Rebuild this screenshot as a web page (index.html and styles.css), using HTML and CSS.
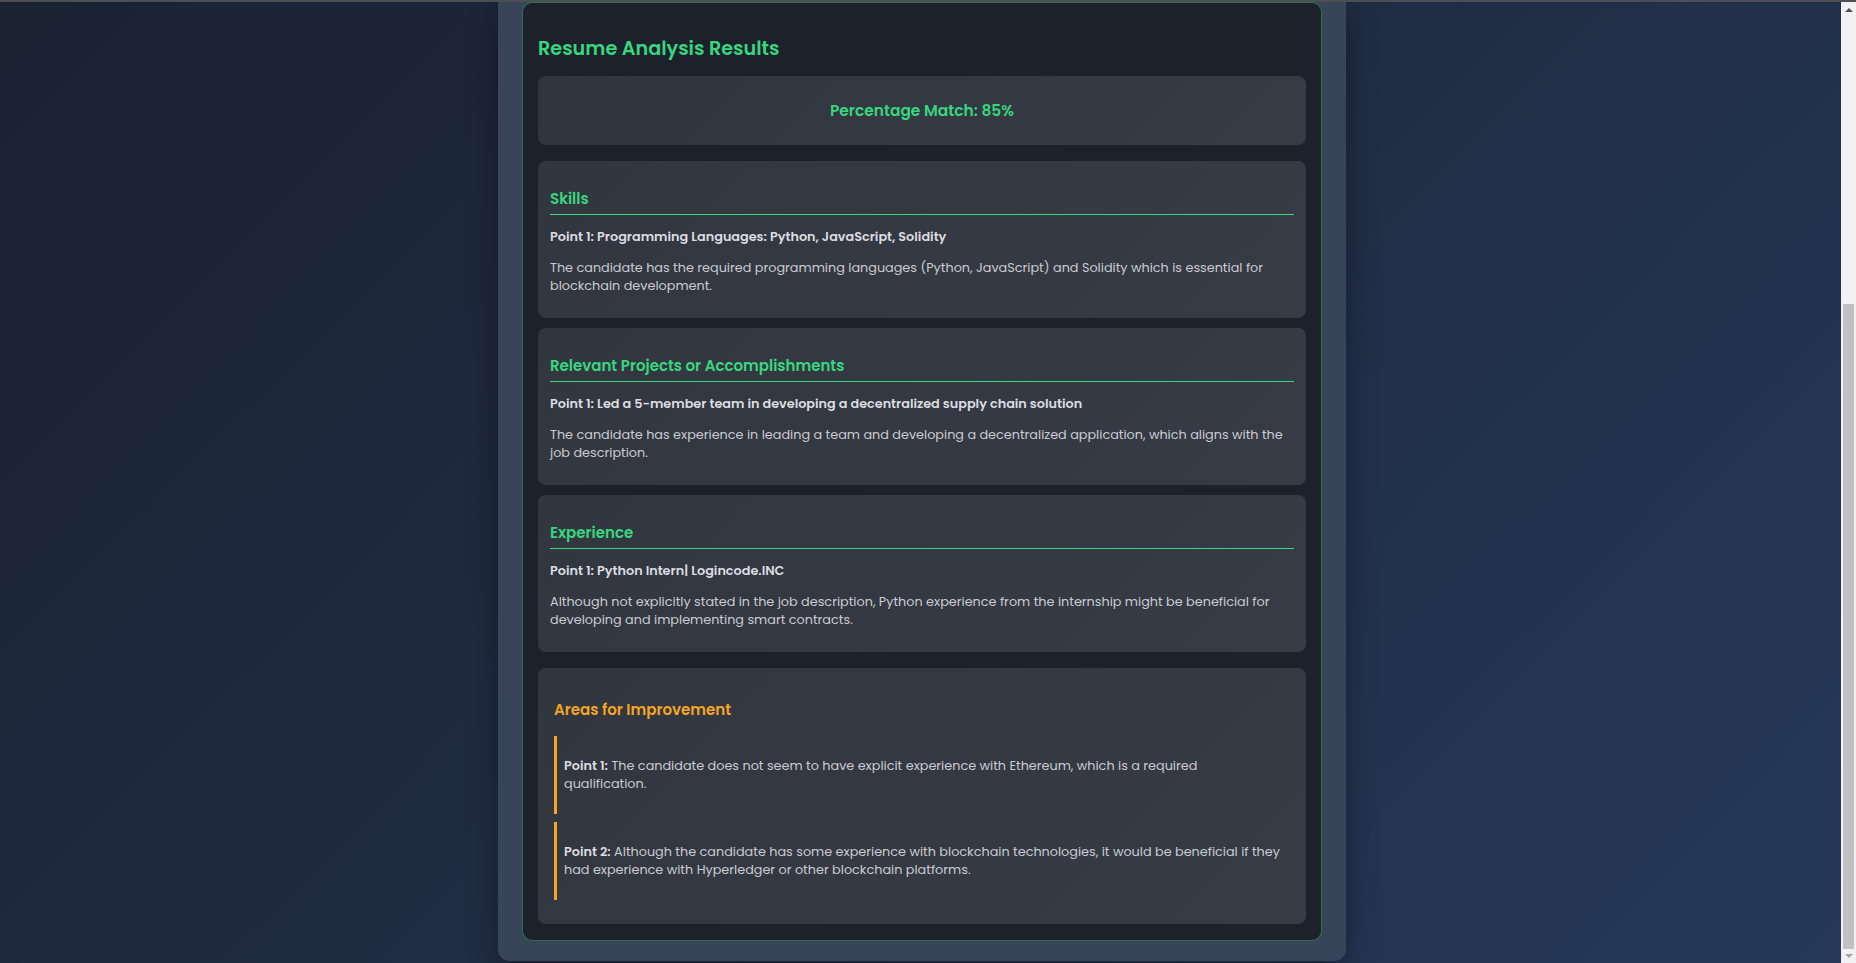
FILE: index.html
```html
<!DOCTYPE html>
<html lang="en">
<head>
<meta charset="utf-8">
<title>Resume Analysis Results</title>
<link rel="stylesheet" href="styles.css">
</head>
<body>
<div class="topline"></div>
<div class="viewport">
  <main class="page">
    <div class="panel">
      <section class="results">
        <h2 class="results-title">Resume Analysis Results</h2>
        <div class="match-card">Percentage Match: 85%</div>

        <div class="section-card">
          <h3 class="section-title">Skills</h3>
          <p class="point-title">Point 1: Programming Languages: Python, JavaScript, Solidity</p>
          <p class="point-desc">The candidate has the required programming languages (Python, JavaScript) and Solidity which is essential for blockchain development.</p>
        </div>

        <div class="section-card">
          <h3 class="section-title">Relevant Projects or Accomplishments</h3>
          <p class="point-title">Point 1: Led a 5-member team in developing a decentralized supply chain solution</p>
          <p class="point-desc">The candidate has experience in leading a team and developing a decentralized application, which aligns with the job description.</p>
        </div>

        <div class="section-card last">
          <h3 class="section-title">Experience</h3>
          <p class="point-title">Point 1: Python Intern| Logincode.INC</p>
          <p class="point-desc">Although not explicitly stated in the job description, Python experience from the internship might be beneficial for developing and implementing smart contracts.</p>
        </div>

        <div class="improve-card">
          <h3 class="improve-title">Areas for Improvement</h3>
          <div class="improve-item">
            <p><strong>Point 1:</strong> The candidate does not seem to have explicit experience with Ethereum, which is a required qualification.</p>
          </div>
          <div class="improve-item">
            <p><strong>Point 2:</strong> Although the candidate has some experience with blockchain technologies, it would be beneficial if they had experience with Hyperledger or other blockchain platforms.</p>
          </div>
        </div>
      </section>
    </div>
  </main>
  <div class="scrollbar" aria-hidden="true">
    <span class="arrow arrow-up"></span>
    <span class="track"><span class="thumb"></span></span>
    <span class="arrow arrow-down"></span>
  </div>
</div>
</body>
</html>
```

FILE: styles.css
```css
* {
  box-sizing: border-box;
}

html,
body {
  height: 100%;
}

body {
  margin: 0;
  overflow: hidden;
  font-family: "Poppins", "Inter", "Open Sans", sans-serif;
  color: #d1d5db;
  display: flex;
  flex-direction: column;
}

.topline {
  height: 2px;
  flex: none;
  background: #4d4f53;
}

.viewport {
  flex: 1;
  display: flex;
  min-height: 0;
}

.page {
  flex: 1;
  display: flex;
  justify-content: center;
  padding-left: 3px;
  overflow: hidden;
  background: linear-gradient(135deg, #1a2232 0%, #1f2b41 45%, #26395a 100%);
}

/* fake classic scrollbar, scrolled to the bottom */
.scrollbar {
  width: 15px;
  flex: none;
  display: flex;
  flex-direction: column;
  align-items: center;
  background: #f1f1f1;
}

.arrow {
  flex: none;
  width: 0;
  height: 0;
  border-left: 4px solid transparent;
  border-right: 4px solid transparent;
}

.arrow-up {
  margin-top: 6px;
  border-bottom: 4px solid #505050;
}

.arrow-down {
  margin: 5px 0 5px;
  border-top: 4px solid #a3a3a3;
}

.track {
  flex: 1;
  width: 100%;
  display: flex;
  flex-direction: column;
  justify-content: flex-end;
  align-items: center;
}

.thumb {
  width: 11px;
  height: 645px;
  background: #c1c1c1;
}

.panel {
  width: 848px;
  align-self: flex-start;
  padding: 0 24px 20px;
  background: #384559;
  border-radius: 0 0 12px 12px;
  box-shadow: 0 10px 30px rgba(0, 0, 0, 0.35);
}

.results {
  background: #1c212b;
  border: 1px solid rgba(56, 214, 127, 0.45);
  border-radius: 10px;
  padding: 17px 15px 16px;
}

.results-title {
  margin: 15px 0 13px;
  font-size: 19.2px;
  line-height: 28px;
  font-weight: 600;
  color: #38d67f;
}

.match-card {
  height: 69px;
  display: flex;
  align-items: center;
  justify-content: center;
  border-radius: 8px;
  background: linear-gradient(135deg, #30353e, #363b45);
  color: #38d67f;
  font-size: 15.4px;
  font-weight: 600;
  margin-bottom: 16px;
}

.section-card {
  border-radius: 8px;
  background: linear-gradient(135deg, #31363f, #363b45);
  padding: 12px 12px 10px;
  margin-bottom: 10px;
}

.section-card.last {
  margin-bottom: 16px;
}

.section-title {
  margin: 14px 0 0;
  padding-bottom: 3px;
  border-bottom: 1px solid #38d67f;
  font-size: 15px;
  line-height: 24px;
  font-weight: 600;
  color: #38d67f;
}

.point-title {
  margin: 13px 0;
  font-size: 12.8px;
  line-height: 18px;
  font-weight: 600;
  color: #dcdde0;
}

.point-desc {
  margin: 13px 0;
  font-size: 12.8px;
  line-height: 18px;
  color: #c9cbd0;
}

.improve-card {
  border-radius: 8px;
  background: linear-gradient(135deg, #31363f, #363b45);
  padding: 16px;
}

.improve-title {
  margin: 13px 0 13px;
  font-size: 15px;
  line-height: 26px;
  font-weight: 600;
  color: #f5a524;
}

.improve-item {
  border-left: 3px solid #f5a524;
  padding: 8px 8px 8px 7px;
  margin-bottom: 8px;
}

.improve-item p {
  margin: 13px 0;
  font-size: 12.8px;
  line-height: 18px;
  color: #c9cbd0;
}

.improve-item strong {
  font-weight: 600;
  color: #dcdde0;
}
```
